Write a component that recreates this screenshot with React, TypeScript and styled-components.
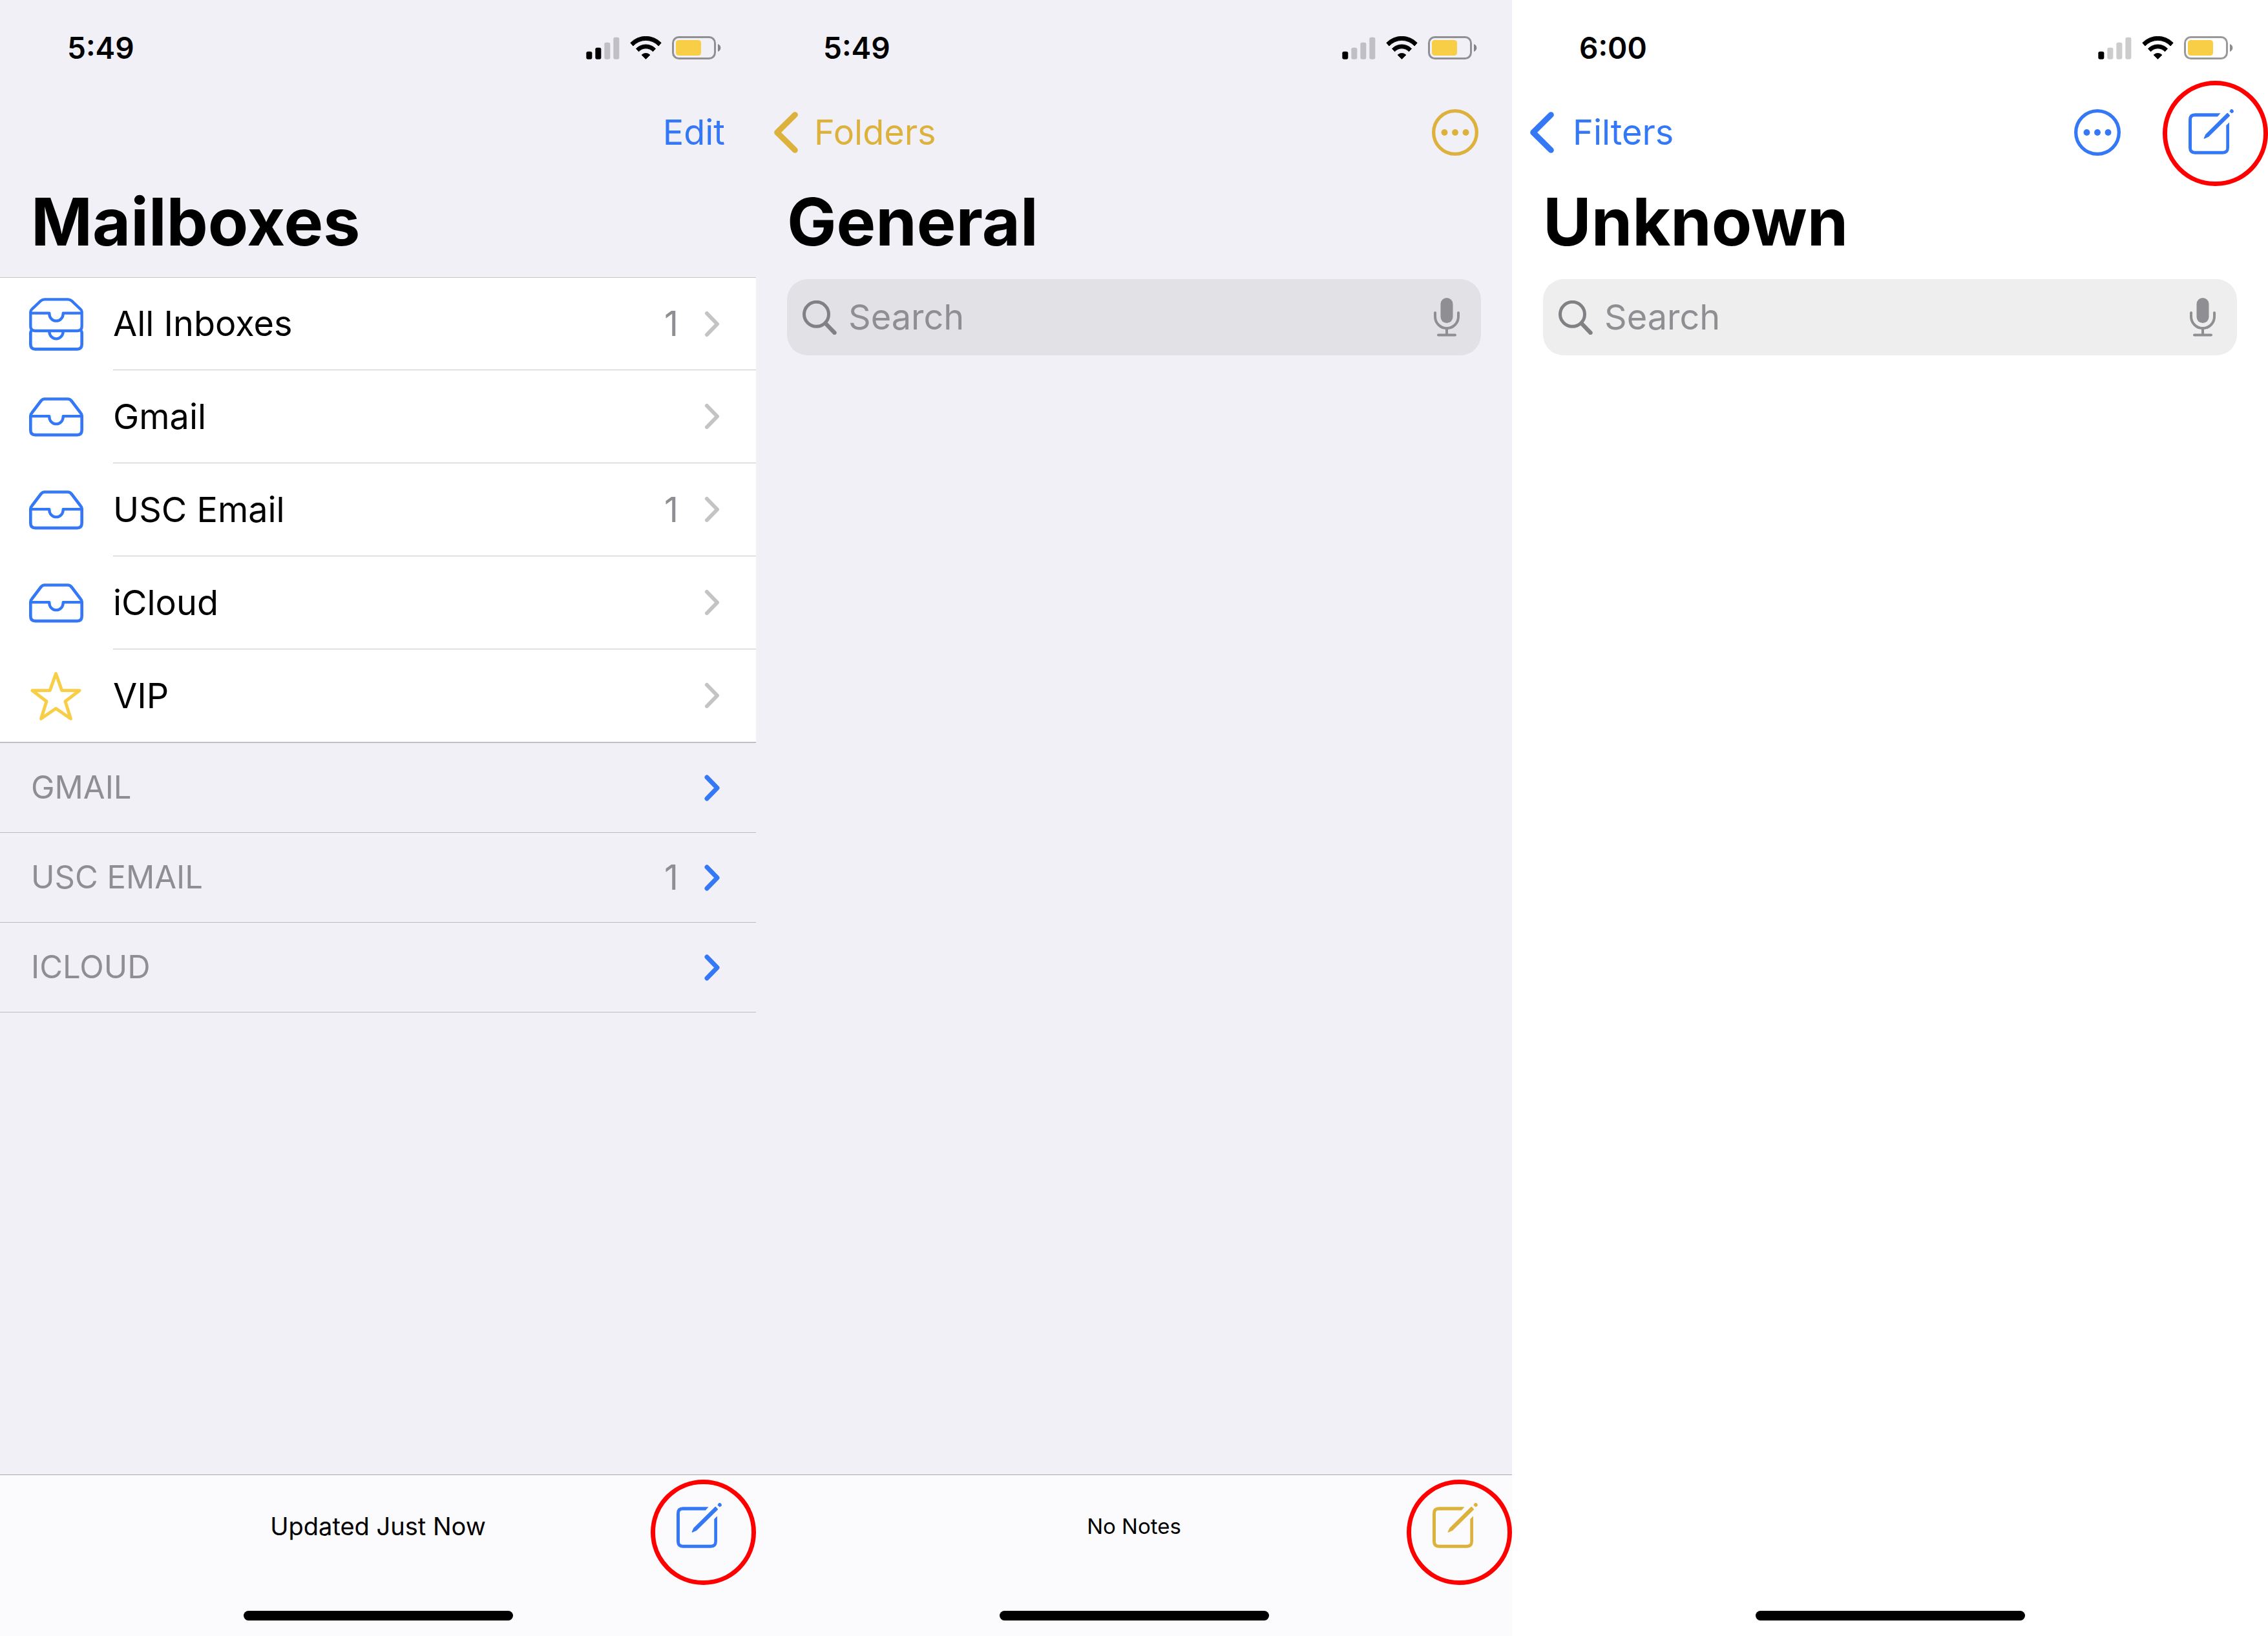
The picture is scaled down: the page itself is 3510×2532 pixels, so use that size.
import React from "react";
import styled, { createGlobalStyle, ThemeProvider } from "styled-components";

const theme = {
  blue: "#3478f6",
  gold: "#dcb23d",
  star: "#f8ce46",
  grey: "#8e8e93",
  groupedBg: "#f1f0f6",
  toolbarBg: "#fbfbfd",
  separator: "#c6c6c8",
  mark: "#ff0000",
};

const GlobalStyle = createGlobalStyle`
  * { box-sizing: border-box; }
  body {
    margin: 0;
    background: #fff;
    color: #000;
    font-family: Inter, "Liberation Sans", sans-serif;
    font-size: 54px;
    line-height: 64px;
  }
`;

/* ---------- Layout ---------- */

const Screens = styled.main`
  display: grid;
  grid-template-columns: repeat(3, minmax(0, 1fr));
  min-height: 100vh;
`;

const Screen = styled.section<{ $bg: string; $tint: string }>`
  display: flex;
  flex-direction: column;
  background: ${(p) => p.$bg};
  --tint: ${(p) => p.$tint};
`;

const StatusRow = styled.div`
  display: flex;
  align-items: center;
  justify-content: space-between;
  height: 148px;
  padding: 0 54px 0 104px;
`;

const Time = styled.time`
  font-size: 46px;
  font-weight: 600;
`;

const StatusIcons = styled.div`
  display: flex;
  align-items: center;
  gap: 16px;
`;

const NavRow = styled.nav<{ $end?: number }>`
  display: flex;
  align-items: center;
  height: 114px;
  padding: 0 ${(p) => p.$end ?? 52}px 0 28px;
`;

const NavActions = styled.div`
  display: flex;
  align-items: center;
  gap: 105px;
  margin-left: auto;
`;

const BackLink = styled.a<{ $gap: number }>`
  display: flex;
  align-items: center;
  gap: ${(p) => p.$gap}px;
  color: var(--tint);
  text-decoration: none;
`;

const PlainButton = styled.button`
  position: relative;
  display: flex;
  padding: 0;
  border: 0;
  background: none;
  color: var(--tint);
  font: inherit;
`;

const ComposeBox = styled(PlainButton)`
  margin-bottom: 3px;
`;

const Title = styled.h1`
  margin: 0;
  padding: 0 48px;
  font-size: 102px;
  font-weight: 700;
  line-height: 162px;
`;

/* ---------- Mail list ---------- */

const List = styled.ul`
  margin: 5px 0 0;
  padding: 0;
  list-style: none;
  border-top: 1px solid ${(p) => p.theme.separator};
  background: #fff;
`;

const RowLink = styled.a`
  display: flex;
  height: 144px;
  color: inherit;
  text-decoration: none;

  li:first-child > & {
    height: 143px;
  }
`;

const IconCell = styled.span`
  display: flex;
  flex: none;
  align-items: center;
  justify-content: center;
  width: 175px;
  padding-right: 2px;
`;

const RowBody = styled.span`
  display: flex;
  flex: 1;
  align-items: center;
  padding-right: 56px;
  border-bottom: 1px solid ${(p) => p.theme.separator};

  li:last-child & {
    margin-left: -175px;
    padding-left: 175px;
  }
`;

const Count = styled.span`
  margin-left: auto;
  color: ${(p) => p.theme.grey};
`;

const Arrow = styled.span<{ $color: string }>`
  display: flex;
  margin-left: 40px;
  color: ${(p) => p.$color};
`;

const AccountList = styled.ul`
  margin: 0;
  padding: 0;
  list-style: none;
  border-top: 1px solid #bcbbc0;
`;

const AccountLink = styled.a`
  display: flex;
  align-items: center;
  height: 139px;
  padding: 0 56px 0 48px;
  border-bottom: 1px solid #bcbbc0;
  color: ${(p) => p.theme.grey};
  text-decoration: none;
`;

const AccountName = styled.span`
  flex: 1;
  font-size: 49px;
`;

/* ---------- Search ---------- */

const SearchField = styled.label<{ $bg: string }>`
  display: flex;
  align-items: center;
  gap: 18px;
  height: 118px;
  margin: 8px 48px 0;
  padding: 0 33px 0 24px;
  border-radius: 32px;
  background: ${(p) => p.$bg};
  --tint: ${(p) => p.theme.grey};
`;

const SearchInput = styled.input`
  flex: 1;
  min-width: 0;
  padding: 0;
  border: 0;
  outline: 0;
  background: none;
  font: inherit;

  &::placeholder {
    color: ${(p) => p.theme.grey};
    opacity: 1;
  }
`;

/* ---------- Bottom ---------- */

const Footer = styled.footer`
  margin-top: auto;
`;

const BarFooter = styled(Footer)`
  border-top: 1px solid #a9a9ad;
  background: ${(p) => p.theme.toolbarBg};
`;

const Toolbar = styled.div`
  display: grid;
  grid-template-columns: 1fr auto 1fr;
  align-items: center;
  height: 157px;
  padding: 0 52px;
`;

const Status = styled.p<{ $size: number }>`
  grid-column: 2;
  margin: 0;
  font-size: ${(p) => p.$size}px;
`;

const ToolbarEnd = styled.div`
  justify-self: end;
`;

const HomeArea = styled.div`
  display: flex;
  justify-content: center;
  padding: 53px 0 24px;
`;

const HomeIndicator = styled.div`
  width: 417px;
  height: 15px;
  border-radius: 8px;
  background: #000;
`;

/* Red ring laid over the compose button. */
const Ring = styled.span<{ $top: number }>`
  position: absolute;
  top: ${(p) => p.$top}px;
  left: -40px;
  width: 163px;
  height: 163px;
  border: 7px solid ${(p) => p.theme.mark};
  border-radius: 50%;
  pointer-events: none;
`;

/* ---------- Icons ---------- */

const SignalIcon = ({ bars }: { bars: number }) => (
  <svg width="52" height="35" viewBox="0 0 156 105" aria-label={`${bars} of 4 bars`}>
    {[36, 54, 78, 102].map((h, i) => (
      <rect key={h} x={i * 42 + 1} y={104 - h} width="27" height={h} rx="8" opacity={i < bars ? 1 : 0.2} />
    ))}
  </svg>
);

const WifiIcon = () => (
  <svg width="49" height="36" viewBox="0 0 146 108" aria-label="Wi-Fi">
    <g strokeWidth="3" stroke="#000" strokeLinejoin="round">
      <path d="M2 31A99 99 0 0 1 144 31L132 45A80 80 0 0 0 14 45Z" />
      <path d="M28 58A63 63 0 0 1 118 58L106 71A45 45 0 0 0 40 71Z" />
      <path d="M54 87A28 28 0 0 1 92 87L73 106Z" />
    </g>
  </svg>
);

const BatteryIcon = () => (
  <svg width="76" height="36" viewBox="0 0 228 108" aria-label="Battery">
    <rect x="4.5" y="4.5" width="195" height="99" rx="27" fill="none" stroke="#000" strokeWidth="9" opacity="0.4" />
    <path d="M213 36q13 6 13 18t-13 18z" opacity="0.45" />
    <rect x="18" y="18" width="117" height="72" rx="13" fill="#f8ce46" />
  </svg>
);

const BackIcon = () => (
  <svg width="37" height="64" viewBox="0 0 111 192" fill="none" aria-hidden="true">
    <path d="M97 14L14 96L97 178" stroke="currentColor" strokeWidth="27" strokeLinecap="round" strokeLinejoin="round" />
  </svg>
);

const ChevronIcon = ({ weight }: { weight: number }) => (
  <svg width="24" height="41" viewBox="0 0 24 41" fill="none" aria-hidden="true">
    <path d="M4 4L20 20.5L4 37" stroke="currentColor" strokeWidth={weight} strokeLinecap="round" strokeLinejoin="round" />
  </svg>
);

const MoreIcon = () => (
  <svg width="72" height="72" viewBox="0 0 218 218" aria-hidden="true">
    <circle cx="109" cy="109" r="101" fill="none" stroke="currentColor" strokeWidth="16" />
    <g fill="currentColor">
      <circle cx="59" cy="109" r="15" />
      <circle cx="109" cy="109" r="15" />
      <circle cx="159" cy="109" r="15" />
    </g>
  </svg>
);

const ComposeIcon = () => (
  <svg width="71" height="71" viewBox="0 0 212 212" fill="currentColor" aria-hidden="true">
    <path d="M148 22H30Q0 22 0 52V181Q0 211 30 211H158Q188 211 188 181V64L174 78V183Q174 196 160 196H28Q15 196 15 183V50Q15 37 28 37H134Z" />
    <path d="M71 136L79 119L178 21Q180 19 182 21L191 31Q192 33 190 35L93 131L75 139Q70 141 71 136Z" />
    <path d="M190 12L195 4A10 10 0 0 1 208 17L200 22Q198 22 197 20L190 14Z" />
  </svg>
);

const TrayIcon = () => (
  <svg width="84" height="61" viewBox="0 0 252 182" fill="none" stroke="currentColor" aria-hidden="true">
    <path strokeWidth="14" d="M7 84Q7 78 14 70L55 16Q62 7 72 7H180Q190 7 197 16L238 70Q245 78 245 84V152Q245 174 223 174H29Q7 174 7 152Z" />
    <path strokeWidth="13" d="M7 87H94V90A32 33 0 0 0 158 90V87H245" strokeLinejoin="round" />
  </svg>
);

const TraysIcon = () => (
  <svg width="84" height="82" viewBox="0 0 252 246" fill="none" stroke="currentColor" aria-hidden="true">
    <path strokeWidth="13" d="M7 64Q7 58 13 53L54 14Q62 7 72 7H180Q190 7 198 14L239 53Q245 58 245 64V132Q245 153 224 153H28Q7 153 7 132Z" />
    <path strokeWidth="14" d="M14 153Q7 154 7 164V216Q7 238 29 238H223Q245 238 245 216V164Q245 154 238 153" />
    <path strokeWidth="13" d="M7 71H94V74A32 33 0 0 0 158 74V71H245" strokeLinejoin="round" />
    <path strokeWidth="13" d="M94 157A32 33 0 0 0 158 157" />
  </svg>
);

const StarIcon = () => (
  <svg width="81" height="77" viewBox="0 0 81 77" fill="none" aria-hidden="true">
    <path
      d="M40.5 3.5L49.6 29.4L77 29.8L55 46.4L63.4 73.3L40.5 57.5L17.6 73.3L26 46.4L4 29.8L31.4 29.4Z"
      stroke="currentColor"
      strokeWidth="5"
      strokeLinejoin="round"
    />
  </svg>
);

const SearchIcon = () => (
  <svg width="53" height="53" viewBox="0 0 158 159" fill="none" stroke="#808085" aria-hidden="true">
    <circle cx="64" cy="64" r="57" strokeWidth="15" />
    <path d="M106 106L148 150" strokeWidth="19" strokeLinecap="round" />
  </svg>
);

const MicIcon = () => (
  <svg width="40" height="60" viewBox="0 0 40 60" fill="none" stroke="currentColor" aria-hidden="true">
    <rect x="10.5" y="0" width="19" height="39" rx="9.5" fill="currentColor" stroke="none" />
    <path d="M2 23V29A18 18 0 0 0 38 29V23" strokeWidth="4" strokeLinecap="round" />
    <path d="M20 47V57" strokeWidth="4" />
    <path d="M7 57.5H33" strokeWidth="4" strokeLinecap="round" />
  </svg>
);

/* ---------- Parts ---------- */

const StatusBar = ({ time, bars }: { time: string; bars: number }) => (
  <StatusRow>
    <Time>{time}</Time>
    <StatusIcons>
      <SignalIcon bars={bars} />
      <WifiIcon />
      <BatteryIcon />
    </StatusIcons>
  </StatusRow>
);

const ComposeButton = ({ ringTop }: { ringTop: number }) => (
  <ComposeBox type="button" aria-label="Compose">
    <ComposeIcon />
    <Ring $top={ringTop} />
  </ComposeBox>
);

const MoreButton = () => (
  <PlainButton type="button" aria-label="More">
    <MoreIcon />
  </PlainButton>
);

const Search = ({ bg }: { bg: string }) => (
  <SearchField $bg={bg}>
    <SearchIcon />
    <SearchInput type="text" placeholder="Search" aria-label="Search" />
    <PlainButton type="button" aria-label="Dictate">
      <MicIcon />
    </PlainButton>
  </SearchField>
);

const Home = () => (
  <HomeArea>
    <HomeIndicator />
  </HomeArea>
);

const BottomBar = ({ text, size }: { text: string; size: number }) => (
  <BarFooter>
    <Toolbar>
      <Status $size={size}>{text}</Status>
      <ToolbarEnd>
        <ComposeButton ringTop={-35} />
      </ToolbarEnd>
    </Toolbar>
    <Home />
  </BarFooter>
);

type Mailbox = { name: string; count?: number; icon: React.ReactNode; color: string };

const mailboxes: Mailbox[] = [
  { name: "All Inboxes", count: 1, icon: <TraysIcon />, color: theme.blue },
  { name: "Gmail", icon: <TrayIcon />, color: theme.blue },
  { name: "USC Email", count: 1, icon: <TrayIcon />, color: theme.blue },
  { name: "iCloud", icon: <TrayIcon />, color: theme.blue },
  { name: "VIP", icon: <StarIcon />, color: theme.star },
];

const accounts: { name: string; count?: number }[] = [
  { name: "GMAIL" },
  { name: "USC EMAIL", count: 1 },
  { name: "ICLOUD" },
];

const TintedCell = styled(IconCell)<{ $color: string }>`
  color: ${(p) => p.$color};
`;

const RowName = styled.span`
  flex: 1;
`;

export default function App() {
  return (
    <ThemeProvider theme={theme}>
      <GlobalStyle />
      <Screens>
        <Screen $bg={theme.groupedBg} $tint={theme.blue}>
          <StatusBar time="5:49" bars={2} />
          <NavRow $end={48}>
            <NavActions>
              <PlainButton type="button">Edit</PlainButton>
            </NavActions>
          </NavRow>
          <Title>Mailboxes</Title>
          <List>
            {mailboxes.map((m) => (
              <li key={m.name}>
                <RowLink href="#">
                  <TintedCell $color={m.color}>{m.icon}</TintedCell>
                  <RowBody>
                    <RowName>{m.name}</RowName>
                    {m.count && <Count>{m.count}</Count>}
                    <Arrow $color="#c4c4c6">
                      <ChevronIcon weight={6} />
                    </Arrow>
                  </RowBody>
                </RowLink>
              </li>
            ))}
          </List>
          <AccountList>
            {accounts.map((a) => (
              <li key={a.name}>
                <AccountLink href="#">
                  <AccountName>{a.name}</AccountName>
                  {a.count && <Count>{a.count}</Count>}
                  <Arrow $color={theme.blue}>
                    <ChevronIcon weight={7} />
                  </Arrow>
                </AccountLink>
              </li>
            ))}
          </AccountList>
          <BottomBar text="Updated Just Now" size={38} />
        </Screen>

        <Screen $bg={theme.groupedBg} $tint={theme.gold}>
          <StatusBar time="5:49" bars={1} />
          <NavRow>
            <BackLink href="#" $gap={25}>
              <BackIcon />
              Folders
            </BackLink>
            <NavActions>
              <MoreButton />
            </NavActions>
          </NavRow>
          <Title>General</Title>
          <Search bg="#e2e1e6" />
          <BottomBar text="No Notes" size={33} />
        </Screen>

        <Screen $bg="#ffffff" $tint={theme.blue}>
          <StatusBar time="6:00" bars={1} />
          <NavRow>
            <BackLink href="#" $gap={29}>
              <BackIcon />
              Filters
            </BackLink>
            <NavActions>
              <MoreButton />
              <ComposeButton ringTop={-43} />
            </NavActions>
          </NavRow>
          <Title>Unknown</Title>
          <Search bg="#eeeeee" />
          <Footer>
            <Home />
          </Footer>
        </Screen>
      </Screens>
    </ThemeProvider>
  );
}
